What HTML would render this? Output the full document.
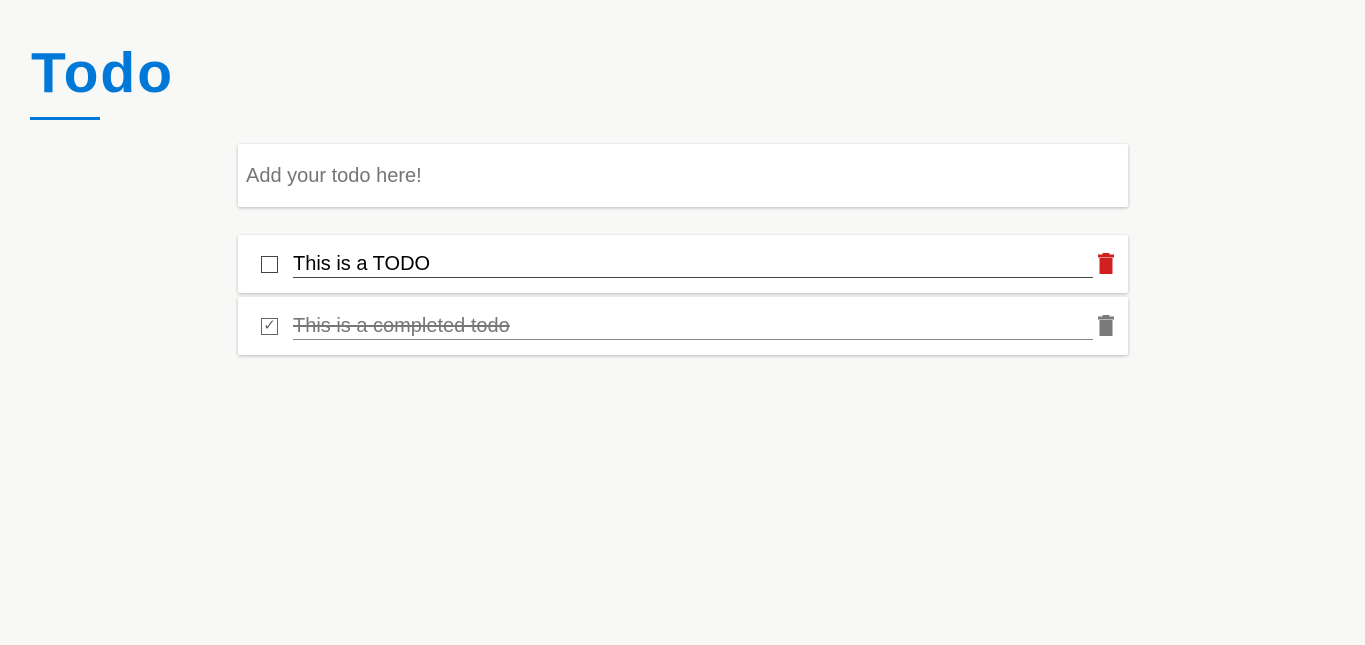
<!DOCTYPE html>
<html><head><style>
body{margin:0;background:#f8f8f7;font-family:"Liberation Sans",sans-serif;width:1365px;height:645px;overflow:hidden;position:relative}
h1{position:absolute;left:31px;top:40px;margin:0;font-size:57px;font-weight:bold;color:#0078d7;letter-spacing:2px;line-height:66px}
.ul{position:absolute;left:30px;top:117px;width:70px;height:3px;background:#0078d7}
.box{position:absolute;left:238px;width:890px;background:#fff;box-shadow:0 1px 3px rgba(0,0,0,.25);border-radius:2px}
.inp{top:144px;height:63px}
.inp span{position:absolute;left:8px;top:21px;font-size:20px;color:#757575}
.item{height:58px}
.cb{position:absolute;left:23px;top:21px;border:1px solid #444;box-sizing:border-box;width:17px;height:17px}
.txt{position:absolute;left:55px;top:16px;width:800px;height:26px;border-bottom:1px solid #444;font-size:20px;line-height:26px}
.tr{position:absolute;left:860px;top:18px}
</style></head><body>
<h1>Todo</h1><div class="ul"></div>
<div class="box inp"><span>Add your todo here!</span></div>
<div class="box item" style="top:235px">
<div class="cb"></div>
<div class="txt" style="color:#000">This is a TODO</div>
<svg class="tr" width="16" height="22" viewBox="0 0 16 22"><rect x="4.5" y="0" width="7" height="2" fill="#d11f1f"/><rect x="0" y="1.5" width="16" height="3" fill="#d11f1f"/><rect x="1.5" y="5" width="13" height="16" fill="#d11f1f"/></svg>
</div>
<div class="box item" style="top:297px">
<div class="cb" style="border-color:#666;font-size:15px;line-height:14px;text-align:center;color:#666">✓</div>
<div class="txt" style="color:#777;text-decoration:line-through;border-color:#888">This is a completed todo</div>
<svg class="tr" width="16" height="22" viewBox="0 0 16 22"><rect x="4.5" y="0" width="7" height="2" fill="#7a7a7a"/><rect x="0" y="1.5" width="16" height="3" fill="#7a7a7a"/><rect x="1.5" y="5" width="13" height="16" fill="#7a7a7a"/></svg>
</div>
</body></html>
